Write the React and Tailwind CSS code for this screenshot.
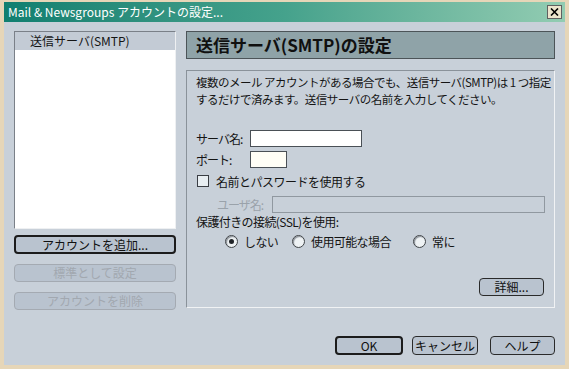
import React from "react";

const FONT = { fontFamily: '"Noto Sans CJK JP", "Liberation Sans", sans-serif' };

// old-style rounded push button
function PushButton({ children, disabled, strong, className = "" }) {
    const border = disabled
        ? "border-[#a4aab2] text-[#a2a8b0]"
        : strong
            ? "border-2 border-[#1c1c1c] text-[#101010]"
            : "border-[#2a2a2a] text-[#101010]";
    return (
        <div
            className={`flex items-center justify-center rounded-[4px] border bg-[#b9c3cf] text-[12px] leading-none ${border} ${className}`}
        >
            {children}
        </div>
    );
}

function Radio({ checked, label }) {
    return (
        <div className="flex items-center gap-[6px]">
            <div className="flex h-[13px] w-[13px] items-center justify-center rounded-full border border-[#404448] bg-[#eef2f4] shadow-[inset_1px_1px_1px_#8a9098]">
                {checked && <div className="h-[5px] w-[5px] rounded-full bg-[#202428]" />}
            </div>
            <span>{label}</span>
        </div>
    );
}

export default function App() {
    return (
        <div
            style={FONT}
            className="flex h-[369px] w-[569px] flex-col overflow-hidden border-x-[4px] border-b-[4px] border-t-[2px] border-[#e6d6b8] bg-[#c8d0d9] text-[12px] text-[#141414]"
        >
            {/* title bar */}
            <div className="flex h-[20px] shrink-0 items-center justify-between bg-gradient-to-r from-[#0f7f70] via-[#45a28c] to-[#92ccb2] pl-[4px] pr-[3px]">
                <span className="text-[12px] leading-none text-white">Mail &amp; Newsgroups アカウントの設定...</span>
                <div className="flex h-[14px] w-[15px] items-center justify-center border border-[#606060] bg-[#ece4cc]">
                    <svg width="9" height="8" viewBox="0 0 9 8">
                        <path d="M1 0.5 L8 7.5 M8 0.5 L1 7.5" stroke="#000" strokeWidth="1.6" />
                    </svg>
                </div>
            </div>

            <div className="flex flex-1 flex-col">
                <div className="flex gap-[10px] pl-[10px] pr-[10px] pt-[9px]">
                    {/* left column */}
                    <div className="flex w-[162px] shrink-0 flex-col">
                        <div className="flex h-[198px] flex-col border border-[#7a8088] border-r-[#eef0f2] border-b-[#eef0f2] bg-white">
                            <div className="flex h-[18px] items-center bg-[#c3cbd5] pl-[15px] text-[12px]">送信サーバ(SMTP)</div>
                        </div>
                        <PushButton strong className="mt-[6px] h-[19px]">アカウントを追加...</PushButton>
                        <PushButton disabled className="mt-[10px] h-[18px]">標準として設定</PushButton>
                        <PushButton disabled className="mt-[10px] h-[18px]">アカウントを削除</PushButton>
                    </div>

                    {/* right column */}
                    <div className="flex min-w-0 flex-1 flex-col">
                        <div className="flex h-[28px] items-center border border-[#4c5458] bg-[#8fa3a8] pl-[9px] text-[17px] font-bold text-[#101010]">
                            送信サーバ(SMTP)の設定
                        </div>
                        <div className="mt-[11px] flex h-[238px] flex-col border border-[#8a929a] border-r-[#f0f2f4] border-b-[#f0f2f4] px-[9px] pt-[3px] leading-[15px]">
                            <p className="whitespace-nowrap text-[11.5px] leading-[17px] tracking-[-0.5px]">
                                複数のメール アカウントがある場合でも、送信サーバ(SMTP)は 1 つ指定
                                <br />
                                するだけで済みます。送信サーバの名前を入力してください。
                            </p>

                            <div className="mt-[22px] flex h-[17px] items-center">
                                <span className="w-[54px] tracking-[-1px]">サーバ名:</span>
                                <div className="h-[17px] w-[112px] border border-[#4a5056] bg-white" />
                            </div>
                            <div className="mt-[4px] flex h-[17px] items-center">
                                <span className="w-[54px] tracking-[-1px]">ポート:</span>
                                <div className="h-[17px] w-[37px] border border-[#4a5056] bg-[#fffef6]" />
                            </div>
                            <div className="mt-[5px] flex h-[16px] items-center gap-[7px] pl-[1px]">
                                <div className="h-[12px] w-[12px] border border-[#3a3e44] bg-[#e8eef2]" />
                                <span className="tracking-[-0.5px]">名前とパスワードを使用する</span>
                            </div>
                            <div className="mt-[7px] flex h-[17px] items-center pl-[21px]">
                                <span className="w-[55px] text-[#9aa2aa] tracking-[-1px]">ユーザ名:</span>
                                <div className="h-[17px] flex-1 border border-[#9098a0] bg-[#c8d0d9]" />
                            </div>
                            <div className="mt-[1px] flex h-[15px] items-center tracking-[-0.6px]">保護付きの接続(SSL)を使用:</div>
                            <div className="mt-[5px] flex h-[15px] items-center pl-[29px] tracking-[-0.6px]">
                                <div className="w-[67px]">
                                    <Radio checked label="しない" />
                                </div>
                                <div className="w-[121px]">
                                    <Radio label="使用可能な場合" />
                                </div>
                                <Radio label="常に" />
                            </div>
                            <div className="mt-auto mb-[11px] flex justify-end pr-[1px]">
                                <PushButton className="h-[18px] w-[65px]">詳細...</PushButton>
                            </div>
                        </div>
                    </div>
                </div>

                {/* dialog buttons */}
                <div className="mt-[26px] flex justify-end gap-[9px] pr-[10px]">
                    <PushButton strong className="h-[19px] w-[68px]">OK</PushButton>
                    <PushButton className="h-[19px] w-[66px]">キャンセル</PushButton>
                    <PushButton className="ml-[3px] h-[19px] w-[65px]">ヘルプ</PushButton>
                </div>
            </div>
        </div>
    );
}
